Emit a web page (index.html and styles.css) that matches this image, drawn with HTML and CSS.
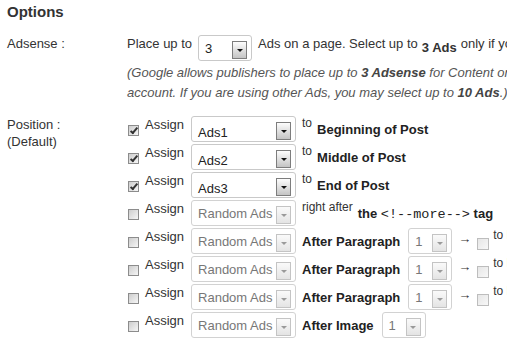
FILE: index.html
```html
<!DOCTYPE html>
<html lang="en">
  <head>
    <meta charset="UTF-8" />
    <meta name="viewport" content="width=device-width, initial-scale=1.0" />
    <title>Options</title>
    <link rel="stylesheet" href="styles.css">
  </head>
  <body>
    <h2 class="title">Options</h2>

    <div class="row adsense">
      <div class="label">Adsense :</div>
      <div class="field">
        <div class="line">
          <span class="t">Place up to</span>
          <span class="select qty"><span class="value">3</span><span class="btn"></span></span>
          <span class="t">Ads on a page. Select up to</span>
          <b class="t low">3 Ads</b>
          <span class="t gap">only if you are using Google Adsense.</span>
        </div>
        <p class="note">(Google allows publishers to place up to <b>3 Adsense</b> for Content on each page of your<br>account. If you are using other Ads, you may select up to <b>10 Ads</b>.)</p>
      </div>
    </div>

    <div class="row">
      <div class="label">Position :<br>(Default)</div>
      <div class="field">
        <div class="ad-row">
          <input type="checkbox" class="check" checked>
          <label class="assign">Assign</label>
          <span class="select ad"><span class="value on">Ads1</span><span class="btn"></span></span>
          <span class="small">to</span>
          <b class="place">Beginning of Post</b>
        </div>
        <div class="ad-row">
          <input type="checkbox" class="check" checked>
          <label class="assign">Assign</label>
          <span class="select ad"><span class="value on">Ads2</span><span class="btn"></span></span>
          <span class="small">to</span>
          <b class="place">Middle of Post</b>
        </div>
        <div class="ad-row">
          <input type="checkbox" class="check" checked>
          <label class="assign">Assign</label>
          <span class="select ad"><span class="value on">Ads3</span><span class="btn"></span></span>
          <span class="small">to</span>
          <b class="place">End of Post</b>
        </div>
        <div class="ad-row">
          <input type="checkbox" class="check">
          <label class="assign">Assign</label>
          <span class="select ad off"><span class="value">Random Ads</span><span class="btn"></span></span>
          <span class="small">right after</span>
          <b class="place">the <code>&lt;!--more--&gt;</code> tag</b>
        </div>
        <div class="ad-row">
          <input type="checkbox" class="check">
          <label class="assign">Assign</label>
          <span class="select ad off"><span class="value">Random Ads</span><span class="btn"></span></span>
          <b class="place">After Paragraph</b>
          <span class="select num off"><span class="value">1</span><span class="btn"></span></span>
          <span class="arrow">&rarr;</span>
          <input type="checkbox" class="check mini">
          <span class="small">to End of Post</span>
        </div>
        <div class="ad-row">
          <input type="checkbox" class="check">
          <label class="assign">Assign</label>
          <span class="select ad off"><span class="value">Random Ads</span><span class="btn"></span></span>
          <b class="place">After Paragraph</b>
          <span class="select num off"><span class="value">1</span><span class="btn"></span></span>
          <span class="arrow">&rarr;</span>
          <input type="checkbox" class="check mini">
          <span class="small">to End of Post</span>
        </div>
        <div class="ad-row">
          <input type="checkbox" class="check">
          <label class="assign">Assign</label>
          <span class="select ad off"><span class="value">Random Ads</span><span class="btn"></span></span>
          <b class="place">After Paragraph</b>
          <span class="select num off"><span class="value">1</span><span class="btn"></span></span>
          <span class="arrow">&rarr;</span>
          <input type="checkbox" class="check mini">
          <span class="small">to End of Post</span>
        </div>
        <div class="ad-row">
          <input type="checkbox" class="check">
          <label class="assign">Assign</label>
          <span class="select ad off"><span class="value">Random Ads</span><span class="btn"></span></span>
          <b class="place">After Image</b>
          <span class="select num off"><span class="value">1</span><span class="btn"></span></span>
        </div>
      </div>
    </div>
  </body>
</html>
```

FILE: styles.css
```css
html {
  overflow: hidden;
}
body {
  font-family: "Liberation Sans", Arial, sans-serif;
  font-size: 13px;
  color: #333;
  background: #fff;
  margin: 0;
  padding: 0 7px;
  white-space: nowrap;
  overflow: hidden;
}
.title {
  font-size: 15px;
  line-height: 18px;
  margin: 3px 0 14px;
  color: #333;
}
.row {
  display: grid;
  grid-template-columns: 120px auto;
}
.row.adsense {
  margin-bottom: 13px;
}
.label {
  line-height: 17px;
}
.line {
  display: flex;
  align-items: flex-start;
  height: 26px;
}
.t {
  line-height: 15px;
  margin-top: 1px;
}
.t.low {
  margin-top: 5px;
  margin-left: 4px;
}
.t.gap {
  margin-left: 4px;
}
.note {
  margin: 2px 0 0;
  font-style: italic;
  line-height: 20px;
  color: #555;
}
.note b {
  color: #444;
}

/* fake select boxes */
.select {
  display: flex;
  align-items: flex-start;
  justify-content: space-between;
  box-sizing: border-box;
  height: 26px;
  flex: none;
  border: 1px solid #c9c9c9;
  border-radius: 3px;
  background: #fff;
  color: #222;
}
.select .value {
  line-height: 15px;
  padding: 5px 0 0 6px;
}
.select .value.on {
  padding-top: 8px;
}
.select .btn {
  display: flex;
  align-items: center;
  justify-content: center;
  box-sizing: border-box;
  width: 15px;
  height: 18px;
  margin: 5px 4px 0 0;
  border: 1px solid #7d7d7d;
  background: linear-gradient(#fdfdfd, #c4c4c4);
}
.select .btn::after {
  content: "";
  border-left: 3px solid transparent;
  border-right: 3px solid transparent;
  border-top: 3px solid #111;
}
.select.off {
  border-color: #d2d2d2;
  color: #777;
}
.select.off .btn {
  border-color: #c4c4c4;
  background: linear-gradient(#fafafa, #e4e4e4);
}
.select.off .btn::after {
  border-top-color: #9a9a9a;
}
.select.qty {
  width: 54px;
  margin: 0 6px;
}
.select.ad {
  width: 105px;
  margin: 0 6px 0 7px;
}
.select.num {
  width: 44px;
  margin: 0 6px 0 8px;
}

/* position rows */
.ad-row {
  display: flex;
  align-items: flex-start;
  height: 28px;
}
.check {
  -webkit-appearance: none;
  appearance: none;
  position: relative;
  flex: none;
  box-sizing: border-box;
  width: 11px;
  height: 11px;
  margin: 9px 6px 0 1px;
  border: 1px solid #8c8c8c;
  background: linear-gradient(135deg, #cdcdcd, #f6f6f6);
}
.check:checked::after {
  content: "";
  position: absolute;
  left: 3px;
  top: 0;
  width: 2px;
  height: 6px;
  border: solid #333;
  border-width: 0 2px 2px 0;
  transform: rotate(40deg);
}
.check.mini {
  width: 12px;
  height: 12px;
  margin: 10px 4px 0 0;
  border-color: #bdbdbd;
  background: linear-gradient(135deg, #e6e6e6, #f8f8f8);
}
.assign {
  line-height: 15px;
  margin-top: 1px;
}
.small {
  font-size: 12px;
  line-height: 15px;
  margin-right: 5px;
}
.place {
  line-height: 15px;
  margin-top: 6px;
  color: #222;
}
.place code {
  font-family: "Liberation Mono", "Courier New", monospace;
  font-weight: normal;
  font-size: 13.5px;
}
.arrow {
  line-height: 15px;
  margin: 3px 6px 0 0;
}
```
